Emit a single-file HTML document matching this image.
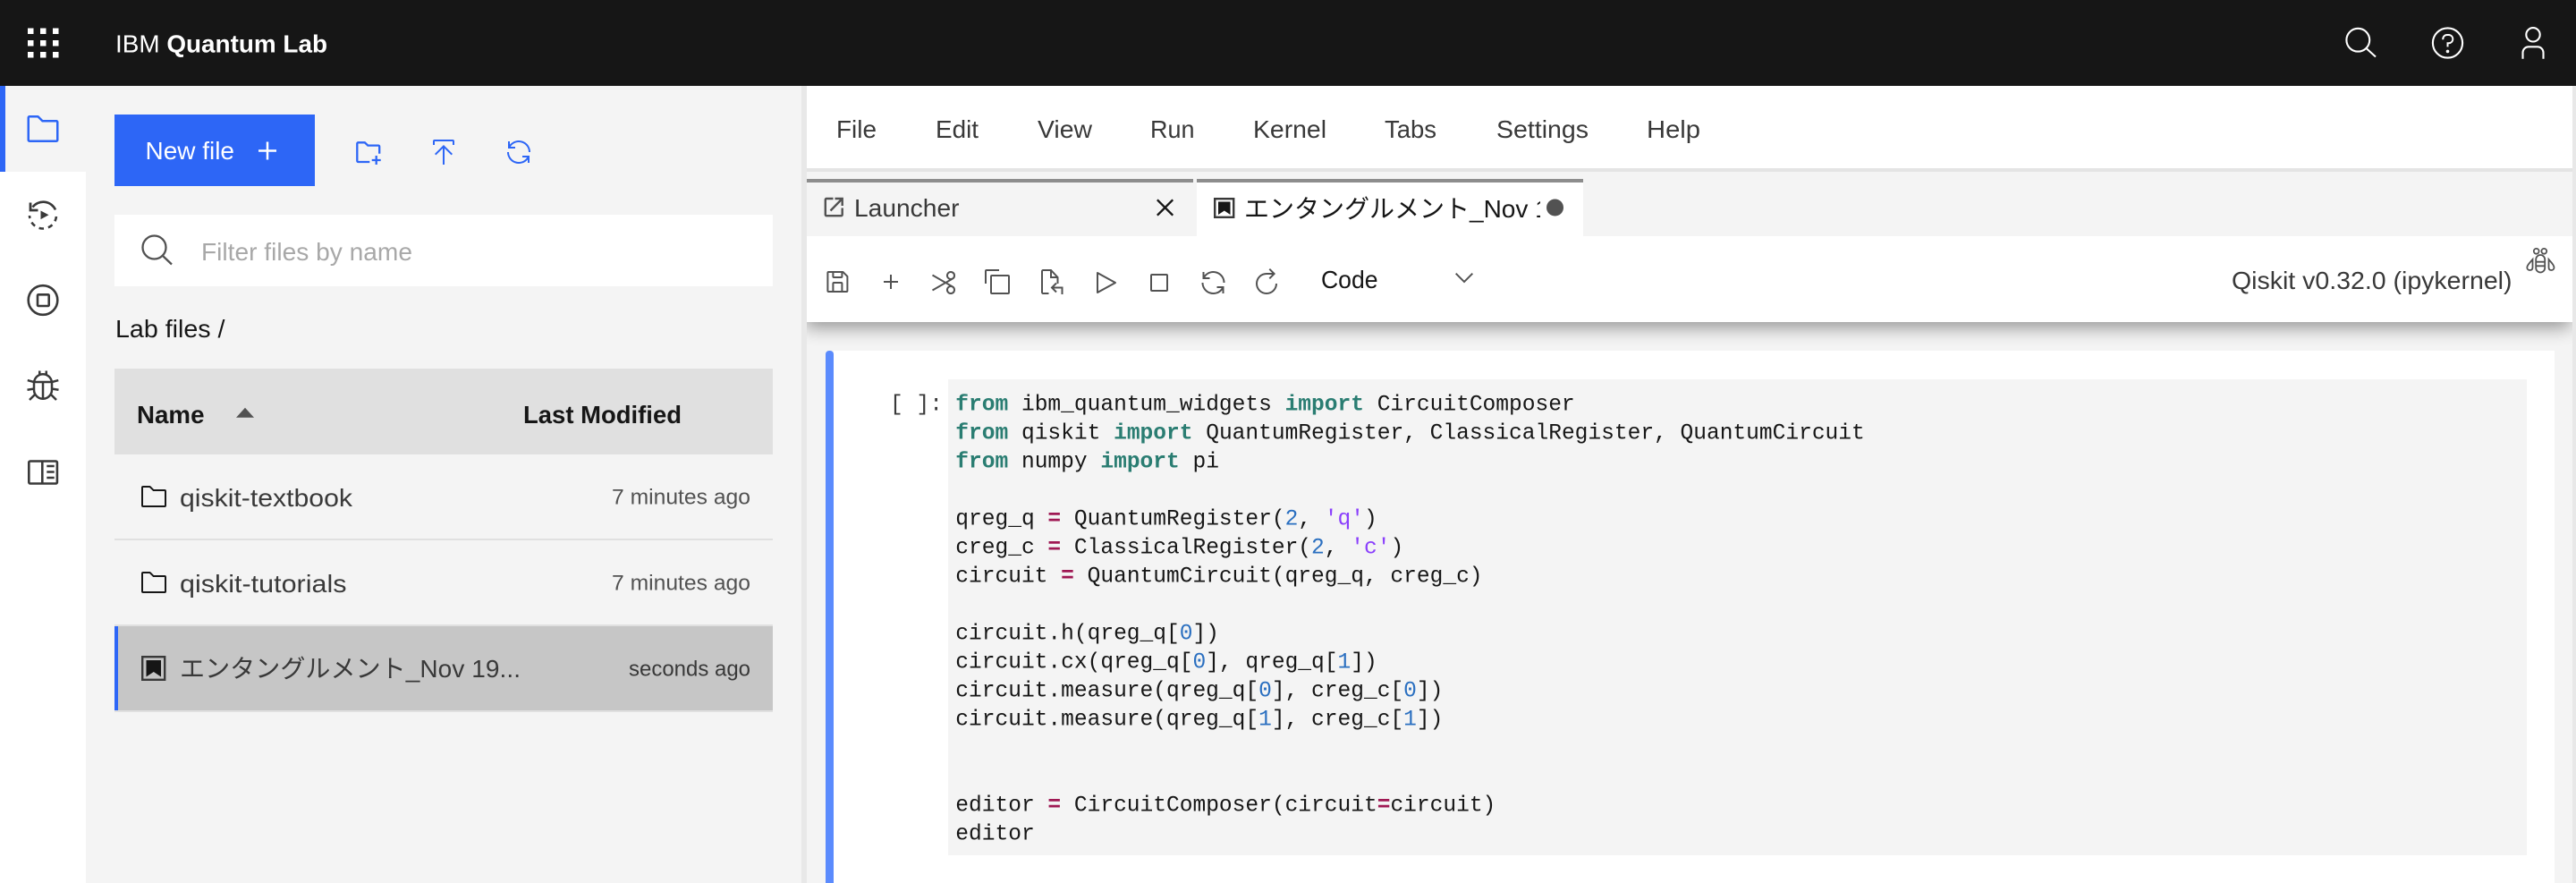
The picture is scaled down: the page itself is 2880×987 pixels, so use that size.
<!DOCTYPE html>
<html lang="en"><head><meta charset="utf-8"><title>IBM Quantum Lab</title>
<style>
html,body{margin:0;padding:0;width:2880px;height:987px;overflow:hidden;background:#f4f4f4}
svg{display:block;position:absolute;left:0;top:0}
text{font-family:"Liberation Sans","Noto Sans CJK JP",sans-serif;font-size:28px;fill:#393939;white-space:pre}
.m text,text.m{font-family:"Liberation Mono",monospace;font-size:24.56px;fill:#161616}
.k{fill:#2a7d72;font-weight:700}.o{fill:#9f1853;font-weight:700}.n{fill:#2a6fc0}.s{fill:#8a3ffc}
.d{font-size:24px;fill:#525252}
.r{fill:#393939}.b{font-weight:700;fill:#161616}
</style></head><body>
<svg width="2880" height="987" viewBox="0 0 2880 987" xmlns="http://www.w3.org/2000/svg">
<defs>
<filter id="bl" x="-2%" y="-100%" width="104%" height="300%"><feGaussianBlur stdDeviation="10"/></filter>
<clipPath id="below"><rect x="902" y="360" width="1974" height="60"/></clipPath>
<clipPath id="tabclip"><rect x="1385" y="205" width="337" height="55"/></clipPath>
<g id="folder"><path d="M11.17,6l3.42,3.41.58.59H28V26H4V6h7.17m0-2H4A2,2,0,0,0,2,6V26a2,2,0,0,0,2,2H28a2,2,0,0,0,2-2V10a2,2,0,0,0-2-2H16L12.59,4.59A2,2,0,0,0,11.17,4Z"/></g>
<g id="renew"><path d="M12,10H6.78A11,11,0,0,1,27,16h2A13,13,0,0,0,6,7.68V4H4v8h8Z"/><path d="M20,22h5.22A11,11,0,0,1,5,16H3a13,13,0,0,0,23,8.32V28h2V20H20Z"/></g>
<g id="search"><path d="M29,27.5859l-7.5521-7.5521a11.0177,11.0177,0,1,0-1.4141,1.4141L27.5859,29ZM4,13a9,9,0,1,1,9,9A9.01,9.01,0,0,1,4,13Z"/></g>
</defs>

<!-- backgrounds -->
<rect width="2880" height="987" fill="#f4f4f4"/>
<rect y="0" width="2880" height="96" fill="#161616"/>
<rect x="0" y="192" width="96" height="795" fill="#fff"/>
<rect x="0" y="96" width="6" height="96" fill="#2d66f6"/>
<rect x="896" y="96" width="6" height="891" fill="#e8e8e8"/>
<rect x="2876" y="96" width="4" height="891" fill="#e8e8e8"/>

<!-- header -->
<g fill="#fff">
<rect x="31" y="31.5" width="6.5" height="6.5"/><rect x="45" y="31.5" width="6.5" height="6.5"/><rect x="59" y="31.5" width="6.5" height="6.5"/>
<rect x="31" y="45" width="6.5" height="6.5"/><rect x="45" y="45" width="6.5" height="6.5"/><rect x="59" y="45" width="6.5" height="6.5"/>
<rect x="31" y="58" width="6.5" height="6.5"/><rect x="45" y="58" width="6.5" height="6.5"/><rect x="59" y="58" width="6.5" height="6.5"/>
<circle cx="2736.5" cy="48" r="0" />
<path transform="translate(2716.5 28) scale(1.25)" d="M17,8H15.5A4.49,4.49,0,0,0,11,12.5V13h1.6v-.5A2.9,2.9,0,0,1,15.5,9.600H17a2.9,2.9,0,0,1,0,5.800H15.200v4.100h1.600V17a4.500,4.500,0,0,0,.200-9Z"/>
<circle cx="2736.500" cy="57.400" r="1.800"/>
</g>
<g fill="none" stroke="#fff" stroke-width="2.100">
<circle cx="2636.300" cy="44.700" r="12.900"/>
<path d="M2645.500 54l10.500 9.500"/>
<circle cx="2736.500" cy="48" r="16.600"/>
<circle cx="2832" cy="38.800" r="7.700"/>
<path d="M2820.500 65.700V58.500a6.500 6.500 0 0 1 6.500-6.200h10a6.500 6.500 0 0 1 6.500 6.200v7.200"/>
</g>
<text x="129" y="58.500" style="fill:#fff" textLength="237" lengthAdjust="spacingAndGlyphs">IBM <tspan font-weight="700">Quantum Lab</tspan></text>

<!-- rail icons -->
<use href="#folder" fill="#2d66f6" transform="translate(28 124) scale(1.25)"/>
<g fill="none" stroke="#393939" stroke-width="2.600">
<path d="M36.500 231.500A15 15 0 0 1 62 234.500"/>
<path d="M34 226.500V235h8.500" stroke-width="2.800"/>
<path d="M63 240A15 15 0 0 1 33 241" stroke-dasharray="5.500 5" stroke-dashoffset="-2"/>
<ellipse cx="48" cy="335.500" rx="16.300" ry="16.300"/>
<rect x="42" y="329.300" width="12.700" height="12.700" rx="1"/>
<rect x="32.300" y="515.500" width="31.600" height="25" rx="1.500"/>
<path d="M47.300 515v26"/>
<path d="M52.300 521h8.400M52.300 527.500h8.400M52.300 534h8.400"/>
</g>
<path d="M45.500 235.500l9 4.800-9 4.800z" fill="#393939"/>
<g fill="#393939" transform="translate(28 412) scale(1.25)"><path d="M29.830,20l.34-2L25,17.150V13c0-.08,0-.15,0-.23l5.060-1.360-.51-1.930-4.830,1.290A9,9,0,0,0,20,5V2H18V4.230a8.810,8.810,0,0,0-4,0V2H12V5a9,9,0,0,0-4.710,5.820L2.460,9.480,2,11.410,7,12.770c0,.08,0,.15,0,.23v4.150L1.840,18l.32,2L7,19.180a8.900,8.900,0,0,0,.82,3.570L3.290,27.290l1.420,1.420,4.190-4.200a9,9,0,0,0,14.200,0l4.190,4.200,1.420-1.420-4.540-4.540A8.900,8.900,0,0,0,25,19.180ZM15,25.920A7,7,0,0,1,9,19V13h6ZM9.290,11a7,7,0,0,1,13.420,0ZM23,19a7,7,0,0,1-6,6.920V13h6Z"/></g>

<!-- file panel -->
<rect x="128" y="128" width="224" height="80" fill="#2d66f6"/>
<text x="162.500" y="178" style="fill:#fff" textLength="99.500" lengthAdjust="spacingAndGlyphs">New file</text>
<path d="M17 15V8h-2v7H8v2h7v7h2v-7h7v-2z" fill="#fff" transform="translate(279 148.500) scale(1.25)"/>
<g fill="none" stroke="#2d66f6" stroke-width="2.300">
<path d="M413.300 181H400.500a1.200 1.200 0 0 1-1.200-1.200V160.500a1.200 1.200 0 0 1 1.200-1.200H407.800l3.500 3.300H423a1.200 1.200 0 0 1 1.200 1.200V171.700"/>
<path d="M420.700 174v10M415.700 179h10"/>
</g>
<g fill="#2d66f6" transform="translate(480 154)"><path d="M6 18L7.410 19.410 15 11.830 15 30 17 30 17 11.830 24.590 19.410 26 18 16 8 6 18z"/><path d="M6 8V4H26V8h2V4a2 2 0 0 0-2-2H6A2 2 0 0 0 4 4V8Z"/></g>
<use href="#renew" fill="#2d66f6" transform="translate(564 154)"/>

<rect x="128" y="240" width="736" height="80" fill="#fff"/>
<g fill="none" stroke="#525252" stroke-width="2.300"><circle cx="172.500" cy="276.500" r="13"/><path d="M182 286l10 9.500"/></g>
<text x="225" y="291" style="fill:#a8a8a8" textLength="236" lengthAdjust="spacingAndGlyphs">Filter files by name</text>
<text x="129" y="377" style="fill:#161616" textLength="122.500" lengthAdjust="spacingAndGlyphs">Lab files /</text>

<rect x="128" y="412" width="736" height="96" fill="#e0e0e0"/>
<text x="153" y="473" class="b" textLength="75.500" lengthAdjust="spacingAndGlyphs">Name</text>
<path d="M264 466.700L274 455.700 284 466.700z" fill="#525252"/>
<text x="585" y="473" class="b" textLength="177" lengthAdjust="spacingAndGlyphs">Last Modified</text>

<use href="#folder" fill="#161616" transform="translate(156 539)"/>
<text x="201" y="566" textLength="193" lengthAdjust="spacingAndGlyphs">qiskit-textbook</text>
<text x="684" y="563.500" class="d" textLength="155" lengthAdjust="spacingAndGlyphs">7 minutes ago</text>
<rect x="128" y="602" width="736" height="2" fill="#e0e0e0"/>

<use href="#folder" fill="#161616" transform="translate(156 635)"/>
<text x="201" y="662" textLength="186.500" lengthAdjust="spacingAndGlyphs">qiskit-tutorials</text>
<text x="684" y="659.500" class="d" textLength="155" lengthAdjust="spacingAndGlyphs">7 minutes ago</text>
<rect x="128" y="698" width="736" height="2" fill="#e0e0e0"/>

<rect x="128" y="700" width="736" height="94" fill="#c6c6c6"/>
<rect x="128" y="700" width="4" height="94" fill="#2d66f6"/>
<rect x="128" y="794" width="736" height="2" fill="#e0e0e0"/>
<rect x="159.200" y="734.200" width="25" height="25.600" fill="none" stroke="#393939" stroke-width="2.400"/>
<path d="M163.500 738h16.500v18.500l-8.200-5.500-8.300 5.500z" fill="#161616"/>
<text x="201" y="757" style="fill:#393939" textLength="381" lengthAdjust="spacing">エンタングルメント_Nov 19...</text>
<text x="703" y="755.500" class="d" style="fill:#393939" textLength="136" lengthAdjust="spacingAndGlyphs">seconds ago</text>

<!-- toolbar shadow (below the toolbar only) -->
<g clip-path="url(#below)"><rect x="900" y="300" width="1974" height="66" fill="#000" opacity=".4" filter="url(#bl)"/></g>

<!-- menu bar -->
<rect x="902" y="96" width="1974" height="92" fill="#fff"/>
<rect x="902" y="188" width="1974" height="4" fill="#e4e4e4"/>
<text x="935" y="154" textLength="45" lengthAdjust="spacingAndGlyphs">File</text>
<text x="1046" y="154" textLength="48" lengthAdjust="spacingAndGlyphs">Edit</text>
<text x="1160" y="154" textLength="61" lengthAdjust="spacingAndGlyphs">View</text>
<text x="1286" y="154" textLength="49.500" lengthAdjust="spacingAndGlyphs">Run</text>
<text x="1401" y="154" textLength="82" lengthAdjust="spacingAndGlyphs">Kernel</text>
<text x="1548" y="154" textLength="58" lengthAdjust="spacingAndGlyphs">Tabs</text>
<text x="1673" y="154" textLength="103" lengthAdjust="spacingAndGlyphs">Settings</text>
<text x="1841" y="154" textLength="60" lengthAdjust="spacingAndGlyphs">Help</text>

<!-- tabs -->
<rect x="902" y="200" width="432" height="4" fill="#8d8d8d"/>
<rect x="1338" y="200" width="432" height="4" fill="#8d8d8d"/>
<rect x="1338" y="204" width="432" height="60" fill="#fff"/>
<g fill="none" stroke="#525252" stroke-width="2.400">
<path d="M931.500 222H924a1.200 1.200 0 0 0-1.200 1.200V240a1.200 1.200 0 0 0 1.200 1.200H940.500a1.200 1.200 0 0 0 1.200-1.200V232.500"/>
<path d="M933.500 222H941.700V230M941.700 222L928.500 235.500"/>
</g>
<text x="955" y="242" textLength="117.500" lengthAdjust="spacingAndGlyphs">Launcher</text>
<path d="M24 9.400L22.600 8 16 14.600 9.400 8 8 9.400 14.600 16 8 22.600 9.400 24 16 17.400 22.600 24 24 22.600 17.400 16 24 9.400z" fill="#161616" transform="translate(1283.500 213) scale(1.19)"/>
<rect x="1358.200" y="222.200" width="21" height="20.600" fill="none" stroke="#393939" stroke-width="2.400"/>
<path d="M1362 225.500h13.500v14.500l-6.700-4.500-6.800 4.500z" fill="#161616"/>
<g clip-path="url(#tabclip)"><text x="1391" y="243" style="fill:#161616">エンタングルメント_Nov 19...</text></g>
<circle cx="1738.500" cy="232" r="9.500" fill="#525252"/>

<!-- toolbar -->
<rect x="902" y="264" width="1974" height="96" fill="#fff"/>
<g fill="#525252">
<path transform="translate(920.400 299)" d="M27.710,9.290l-5-5A1,1,0,0,0,22,4H6A2,2,0,0,0,4,6V26a2,2,0,0,0,2,2H26a2,2,0,0,0,2-2V10A1,1,0,0,0,27.710,9.290ZM12,6h8v4H12Zm8,20H12V18h8Zm2,0V18a2,2,0,0,0-2-2H12a2,2,0,0,0-2,2v8H6V6h4v4a2,2,0,0,0,2,2h8a2,2,0,0,0,2-2V6.410l4,4V26Z"/>
<path transform="translate(980 299)" d="M17 15V8h-2v7H8v2h7v7h2v-7h7v-2z"/>
<path transform="translate(1039 300)" d="M26.500,19.630,20.240,16l6.260-3.630a5,5,0,0,0-1.210-9.200A5.190,5.190,0,0,0,24,3a5,5,0,0,0-4.330,7.530,5.190,5.190,0,0,0,2.390,2.100L18.240,14.850,4,6.630,3,8.360,16.240,16,3,23.640l1,1.730,14.240-8.220,3.820,2.220a5.190,5.190,0,0,0-2.390,2.100A5,5,0,0,0,24,29a5.190,5.190,0,0,0,1.290-.17,5,5,0,0,0,1.210-9.200ZM21.400,9.530a3,3,0,0,1,1.100-4.120,3,3,0,0,1,4.100,1.110,3,3,0,0,1-1.100,4.110h0A3,3,0,0,1,21.400,9.530Zm5.200,16a3,3,0,0,1-4.100,1.110,3,3,0,0,1-1.100-4.120,3,3,0,0,1,4.100-1.100h0A3,3,0,0,1,26.600,25.480Z"/>
<g transform="translate(1099 299)"><path d="M28,10V28H10V10H28m0-2H10a2,2,0,0,0-2,2V28a2,2,0,0,0,2,2H28a2,2,0,0,0,2-2V10a2,2,0,0,0-2-2Z"/><path d="M4,18H2V4A2,2,0,0,1,4,2H18V4H4Z"/></g>
<path transform="translate(1220 300)" d="M7,28a1,1,0,0,1-1-1V5a1,1,0,0,1,1.482-.876l20,11a1,1,0,0,1,0,1.752l-20,11A1,1,0,0,1,7,28ZM8,6.691V25.309L24.925,16Z"/>
<path transform="translate(1280 300)" d="M24 6H8a2 2 0 0 0-2 2v16a2 2 0 0 0 2 2h16a2 2 0 0 0 2-2V8a2 2 0 0 0-2-2zm0 18H8V8h16z"/>
<use href="#renew" transform="translate(1340.500 300)"/>
<path transform="translate(1401 299)" d="M25,18A10,10,0,1,1,15,8h6.180l-3.580,3.590L19,13l6-6L19,1,17.590,2.410,21.190,6H15A12,12,0,1,0,27,18Z"/>
</g>
<g fill="none" stroke="#525252" stroke-width="2">
<path d="M1172.500 328H1166a1.500 1.500 0 0 1-1-1V303a1.500 1.500 0 0 1 1-1H1175l7.500 8v7"/>
<path d="M1175 302v8h7.500"/>
<path d="M1187.500 329V321.500H1176.500M1181 316.500l-5 5 5 5"/>
</g>
<text x="1477" y="322" style="fill:#161616" textLength="63.500" lengthAdjust="spacingAndGlyphs">Code</text>
<path d="M16 22L6 12l1.400-1.400 8.600 8.600 8.600-8.600L26 12z" fill="#525252" transform="translate(1621 294.400)"/>
<text x="2495" y="323" textLength="313.500" lengthAdjust="spacingAndGlyphs">Qiskit v0.32.0 (ipykernel)</text>
<g fill="none" stroke="#525252" stroke-width="1.800">
<circle cx="2835.700" cy="280.800" r="2.900"/><circle cx="2844.300" cy="280.800" r="2.900"/>
<rect x="2835.200" y="285" width="10" height="19.500" rx="5"/>
<path d="M2835.200 292.700h10M2835.200 297.300h10"/>
<path d="M2831.500 290c-2.500 3-6.200 6-6.200 9 0 2 1.500 3 3 3 2 0 3.200-1 3.200-3z"/>
<path d="M2849.500 290c2.500 3 6 6 6 9 0 2-1.500 3-3 3-2 0-3-1-3-3z"/>
</g>

<!-- notebook cell -->
<rect x="932" y="392" width="1924" height="595" fill="#fff"/>
<path d="M923 987V396a4 4 0 0 1 4-4h1a4 4 0 0 1 4 4v591z" fill="#5b8bfd"/>
<rect x="1060" y="424" width="1765" height="532" fill="#f4f4f4"/>
<g class="m">
<text x="995" y="458.600" style="fill:#393939">[ ]:</text>
<text x="1068.300" y="458.600"><tspan class="k">from</tspan> ibm_quantum_widgets <tspan class="k">import</tspan> CircuitComposer</text>
<text x="1068.300" y="490.600"><tspan class="k">from</tspan> qiskit <tspan class="k">import</tspan> QuantumRegister, ClassicalRegister, QuantumCircuit</text>
<text x="1068.300" y="522.600"><tspan class="k">from</tspan> numpy <tspan class="k">import</tspan> pi</text>
<text x="1068.300" y="586.600">qreg_q <tspan class="o">=</tspan> QuantumRegister(<tspan class="n">2</tspan>, <tspan class="s">'q'</tspan>)</text>
<text x="1068.300" y="618.600">creg_c <tspan class="o">=</tspan> ClassicalRegister(<tspan class="n">2</tspan>, <tspan class="s">'c'</tspan>)</text>
<text x="1068.300" y="650.600">circuit <tspan class="o">=</tspan> QuantumCircuit(qreg_q, creg_c)</text>
<text x="1068.300" y="714.600">circuit.h(qreg_q[<tspan class="n">0</tspan>])</text>
<text x="1068.300" y="746.600">circuit.cx(qreg_q[<tspan class="n">0</tspan>], qreg_q[<tspan class="n">1</tspan>])</text>
<text x="1068.300" y="778.600">circuit.measure(qreg_q[<tspan class="n">0</tspan>], creg_c[<tspan class="n">0</tspan>])</text>
<text x="1068.300" y="810.600">circuit.measure(qreg_q[<tspan class="n">1</tspan>], creg_c[<tspan class="n">1</tspan>])</text>
<text x="1068.300" y="906.600">editor <tspan class="o">=</tspan> CircuitComposer(circuit<tspan class="o">=</tspan>circuit)</text>
<text x="1068.300" y="938.600">editor</text>
</g>
</svg>
</body></html>
